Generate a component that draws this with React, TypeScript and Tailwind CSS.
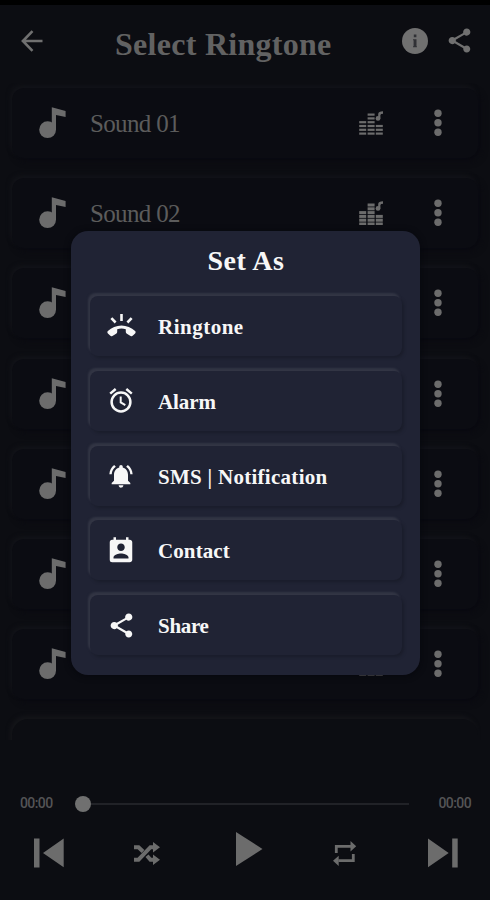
import type { ReactNode } from "react";
import { MdNotificationsActive, MdPermContactCalendar, MdShare } from "react-icons/md";

type Sound = {
  id: number;
  title?: string;
  dense: boolean;
};

const sounds: Sound[] = [
  { id: 1, title: "Sound 01", dense: false },
  { id: 2, title: "Sound 02", dense: true },
  { id: 3, dense: false },
  { id: 4, dense: true },
  { id: 5, dense: false },
  { id: 6, dense: true },
  { id: 7, dense: true },
];

function BackIcon() {
  return (
    <svg width="22" height="22" viewBox="0 0 22 22" fill="none" stroke="currentColor" strokeWidth="2.6">
      <path d="M21.5 11H2M11.5 1.2L1.9 11l9.6 9.8" />
    </svg>
  );
}

function InfoIcon() {
  return (
    <svg width="26" height="26" viewBox="0 0 26 26">
      <circle cx="13" cy="13" r="13" fill="currentColor" />
      <path d="M11.8 6.6h2.6v2.6h-2.6zM11 11.2h3.5v7h.4v1h-3.9v-1h.6v-6h-.6z" fill="#303135" />
    </svg>
  );
}

function NoteIcon() {
  return (
    <svg width="27" height="32" viewBox="0 0 27 32" fill="currentColor">
      <circle cx="8.6" cy="22.7" r="8.4" />
      <path d="M12.8 0.3L26.6 4v6L17 8v15h-4.2z" />
    </svg>
  );
}

function EqualizerIcon({ dense }: { dense: boolean }) {
  const columns = [
    { x: 0.2, bars: 4 },
    { x: 8.6, bars: 6 },
    { x: 16.8, bars: 3 },
  ];
  return (
    <svg width="24" height="24" viewBox="0 0 24 24" fill="currentColor">
      {columns.map((col) => (
        <g key={col.x}>
          {Array.from({ length: col.bars }, (_, i) => (
            <rect key={i} x={col.x} y={21.5 - i * 3.8} width="7" height={dense ? 3 : 2.2} />
          ))}
        </g>
      ))}
      <circle cx="19" cy="7.4" r="2.4" />
      <path d="M19.2 7.5V3Q19.4.4 24 .3v2.5q-2.4 0-2.6 1.2v3.5z" />
    </svg>
  );
}

function DotsIcon() {
  return (
    <svg width="8" height="28" viewBox="0 0 8 28" fill="currentColor">
      <circle cx="4" cy="4.2" r="3.7" />
      <circle cx="4" cy="13.8" r="3.7" />
      <circle cx="4" cy="23.3" r="3.7" />
    </svg>
  );
}

function RingIcon() {
  return (
    <svg width="29" height="24" viewBox="0 0 29 24" fill="currentColor">
      <path d="M14.5 11.5C9.5 11.5 4.5 13.6.9 17.1c-.7.7-.7 1.7 0 2.4l2.2 2.1c.7.7 1.6.7 2.3.3l3.7-2.2c.7-.4 1.1-1 1.1-1.8v-2.7c2.8-.9 5.8-.9 8.6 0v2.7c0 .8.4 1.4 1.1 1.8l3.7 2.2c.7.4 1.6.4 2.3-.3l2.2-2.1c.7-.7.7-1.7 0-2.4-3.6-3.5-8.6-5.6-13.6-5.6z" />
      <path d="M13.2 0h2.6v7h-2.6zM3.4 5.1l1.9-1.8 4.2 4.3-1.8 1.8zM25.6 5.1l-1.9-1.8-4.2 4.3 1.8 1.8z" />
    </svg>
  );
}

function AlarmIcon() {
  return (
    <svg width="24" height="25" viewBox="0 0 24 25" fill="none" stroke="currentColor" strokeWidth="2.5">
      <circle cx="12" cy="14" r="9.4" />
      <path d="M1.2 5.6L6.7 1M22.8 5.6L17.3 1" />
      <path d="M11.7 8.4v6l4.6 2.8" strokeWidth="2" />
    </svg>
  );
}

const options: { label: string; icon: ReactNode; text: string }[] = [
  { label: "Ringtone", icon: <RingIcon />, text: "tracking-[0.5px]" },
  { label: "Alarm", icon: <AlarmIcon />, text: "tracking-[-0.1px]" },
  { label: "SMS | Notification", icon: <MdNotificationsActive size={28} />, text: "tracking-[0.28px]" },
  { label: "Contact", icon: <MdPermContactCalendar size={30} className="mt-[2px]" />, text: "tracking-[0.1px]" },
  { label: "Share", icon: <MdShare size={29} />, text: "tracking-[-0.3px]" },
];

function Header() {
  return (
    <header className="flex h-[83px] shrink-0 items-start border-t-[5px] border-black px-[21px] text-[#707070]">
      <div className="mt-[25px] w-[94px] shrink-0">
        <BackIcon />
      </div>
      <h1 className="mt-[19px] w-[287px] shrink-0 text-[32px] leading-[40px] font-bold tracking-[0.28px] whitespace-nowrap text-[#626262]">
        Select Ringtone
      </h1>
      <div className="mt-[23px] shrink-0">
        <InfoIcon />
      </div>
      <MdShare size={29} className="mt-[21px] ml-[17px] shrink-0" />
    </header>
  );
}

function SoundRow({ title, dense }: { title?: string; dense: boolean }) {
  return (
    <div className="flex h-[70px] shrink-0 items-center rounded-[12px] bg-[#0b0c12] pr-[36px] pl-[27px] text-[#6c6c6c] shadow-[-2px_-3px_4px_#121318,3px_3px_6px_#0a0a11]">
      <NoteIcon />
      <span className="mt-[2px] ml-[24px] flex-1 text-[25px] leading-[30px] tracking-[-0.65px] text-[#5c5c5c]">{title}</span>
      <EqualizerIcon dense={dense} />
      <div className="ml-[51px]">
        <DotsIcon />
      </div>
    </div>
  );
}

function Player() {
  return (
    <footer className="h-[160px] shrink-0 text-[#6c6c6c]">
      <div className="mt-[50px] flex h-[26px] items-center pr-[19px] pl-[20px] font-['Roboto','Liberation_Sans',sans-serif] text-[14px] font-medium tracking-[-0.6px] text-[#545456]">
        <span className="w-[55px]">00:00</span>
        <div className="mt-[2px] flex w-[334px] items-center">
          <div className="size-[16px] rounded-full bg-[#707070]" />
          <div className="h-[2px] flex-1 bg-[#212227]" />
        </div>
        <span className="ml-auto">00:00</span>
      </div>
      <div className="mt-[12px] flex h-[36px] items-start pl-[34px]">
        <svg width="30" height="30" viewBox="0 0 30 30" fill="currentColor" className="mt-[10px]">
          <path d="M0 .5h5.5v29H0zM29.7.5v28.8L9 15z" />
        </svg>
        <svg width="26" height="23" viewBox="0 0 26 23" fill="none" stroke="currentColor" strokeWidth="4" className="mt-[14px] ml-[70px]">
          <path d="M0 5.2h4.5l4.5 4.3M0 17.7h4.5L16.5 5.2H21M13 13.7l3.5 4H21" />
          <path d="M19 0l7 5.2-7 5.2zM19 12.5l7 5.2-7 5.2z" fill="currentColor" stroke="none" />
        </svg>
        <svg width="27" height="34" viewBox="0 0 27 34" fill="currentColor" className="mt-[4px] ml-[76px]">
          <path d="M0 0l26.5 17L0 34z" />
        </svg>
        <svg width="24" height="25" viewBox="0 0 24 25" fill="none" stroke="currentColor" strokeWidth="2.8" className="mt-[13px] ml-[70px]">
          <path d="M3.3 12V5.3H18M20.3 13v6.7H5.5" />
          <path d="M17.5 0l5.7 5.2-5.7 5.2zM5.7 14.7L0 19.8 5.7 25z" fill="currentColor" stroke="none" />
        </svg>
        <svg width="30" height="30" viewBox="0 0 30 30" fill="currentColor" className="mt-[10px] ml-[71px]">
          <path d="M24.2.5h5.5v29h-5.5zM0 .5v28.8L20.7 15z" />
        </svg>
      </div>
    </footer>
  );
}

function SetAsDialog() {
  return (
    <div className="flex h-[444px] w-[349px] flex-col rounded-[17px] bg-[#202334] pr-[18px] pl-[19px] text-[#f7f7f7] shadow-[0_1px_6px_#06070d]">
      <h2 className="mt-[13px] h-[52px] text-center text-[28px] leading-[34px] font-bold tracking-[0.5px]">Set As</h2>
      <div className="flex flex-col gap-[14.8px]">
        {options.map((option) => (
          <button
            key={option.label}
            className="flex h-[60px] items-center rounded-[8px] bg-[#202334] pl-[16px] text-left shadow-[-2px_-3px_2px_#323544,2px_2px_3px_#1a1d2b]"
          >
            <span className="flex w-[30px] shrink-0 justify-center">{option.icon}</span>
            <span className={`mt-[2px] ml-[22px] text-[21px] leading-[28px] font-bold whitespace-nowrap ${option.text}`}>
              {option.label}
            </span>
          </button>
        ))}
      </div>
    </div>
  );
}

export default function App() {
  return (
    <div className="relative flex h-[900px] w-[490px] flex-col overflow-hidden bg-[#0c0d12] font-['Liberation_Serif',serif]">
      <Header />
      <main className="flex h-[657px] shrink-0 flex-col gap-[20.2px] overflow-hidden px-[12px] pt-[5px]">
        {sounds.map((sound) => (
          <SoundRow key={sound.id} title={sound.title} dense={sound.dense} />
        ))}
        <div className="h-[70px] shrink-0 rounded-[16px] bg-[#0c0d12] shadow-[-2px_-3px_4px_#141519]" />
      </main>
      <Player />

      {/* Dialog */}
      <div className="absolute inset-0 flex items-start pt-[231px] pl-[71px]">
        <SetAsDialog />
      </div>
    </div>
  );
}
